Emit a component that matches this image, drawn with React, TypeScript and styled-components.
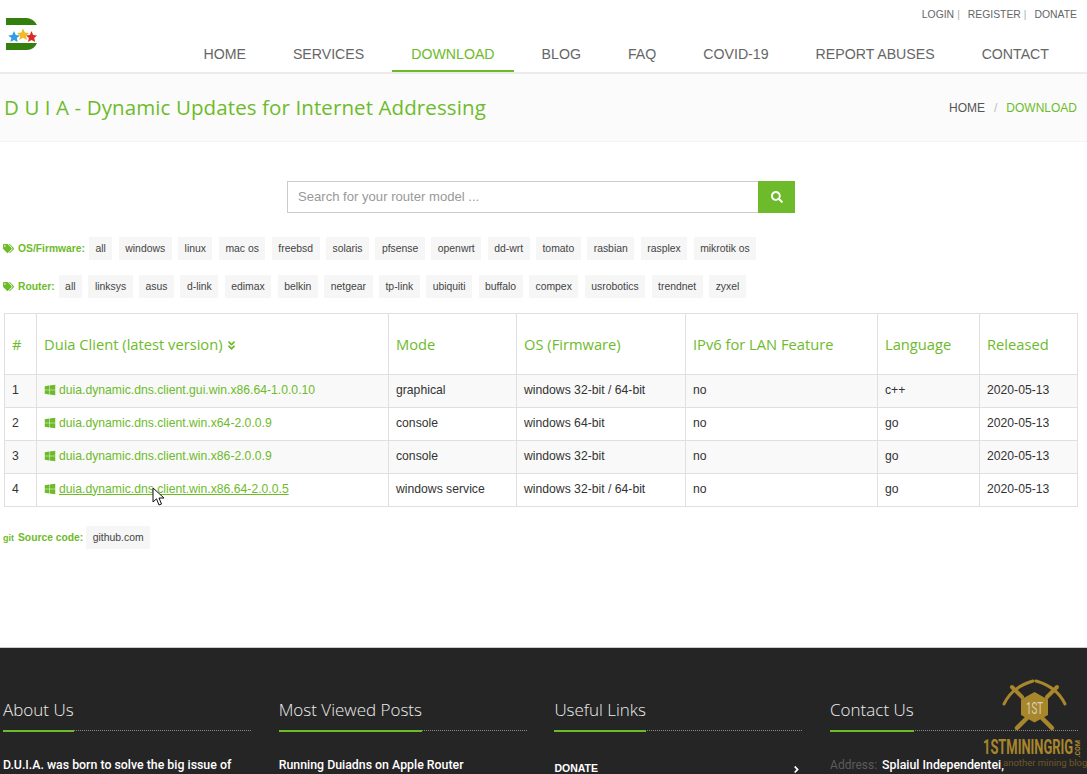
import React from "react";
import styled, { createGlobalStyle } from "styled-components";
import { FaWindows, FaTags, FaAngleDoubleDown, FaSearch, FaAngleRight } from "react-icons/fa";

const GREEN = "#6dbb2a";
const Global = createGlobalStyle`
  html, body { margin: 0; padding: 0; background: #fff; overflow: hidden; }
  body { font-family: "Liberation Sans", Arial, sans-serif; }
  #root { height: 774px; overflow: hidden; position: relative; }
  * { box-sizing: border-box; }
`;
const Page = styled.div`width: 1087px; height: 774px; overflow: hidden; position: relative;`;
const Header = styled.header`
  height: 74px; display: flex; justify-content: space-between;
  border-bottom: 2px solid #ececec;
`;
const LogoBox = styled.div`padding: 18px 0 0 6px;`;
const HeaderRight = styled.div`display: flex; flex-direction: column; align-items: flex-end; padding-right: 10px;`;
const TopLinks = styled.div`
  height: 29px; display: flex; align-items: center; font-size: 10.4px; color: #666;
`;
const TopLink = styled.span``;
const Sep = styled.span`margin: 0 8px 0 3px; color: #aaa; font-size: 10px;`;
const Nav = styled.nav`display: flex; gap: 9px; height: 43px; padding-right: 9px;`;
const NavItem = styled.a<{ $active?: boolean }>`
  padding: 0 19px; font-size: 14.17px; line-height: 51px; height: 43px;
  color: ${(p) => (p.$active ? GREEN : "#666")};
  border-bottom: 2px solid ${(p) => (p.$active ? GREEN : "transparent")};
  display: block; position: relative; z-index: 1; white-space: nowrap;
`;
const Band = styled.section`
  height: 68px; background: #fbfbfb; display: flex; align-items: center; justify-content: space-between;
  padding: 0 10px 2px 4px; border-bottom: 1px solid #f3f3f3;
`;
const PageTitle = styled.h1`
  margin: 0; font: 400 20.5px "Open Sans", sans-serif; color: ${GREEN};
  letter-spacing: 0.1px; white-space: nowrap;
`;
const Crumbs = styled.div`font-size: 12px; color: #555; display: flex; gap: 9px; padding-top: 2px;`;
const CrumbSep = styled.span`color: #bbb;`;
const CrumbActive = styled.span`color: ${GREEN};`;
const Main = styled.main`padding: 39px 10px 0 4px;`;
const SearchRow = styled.div`display: flex; justify-content: center; margin: 0 0 24px 0;`;
const SearchBar = styled.div`display: flex; width: 508px; height: 32px; margin-left: 1px;`;
const SearchInput = styled.div`
  flex: 1; border: 1px solid #ccc; border-right: none; background: #fff; color: #999;
  font-size: 13.1px; line-height: 30px; padding-left: 10px;
`;
const SearchButton = styled.div`
  width: 37px; background: ${GREEN}; color: #fff; display: flex; align-items: center; justify-content: center; font-size: 12px;
`;
const TagRow = styled.div`display: flex; align-items: center; height: 23px; margin-bottom: 15px;`;
const TagLabel = styled.span`
  display: flex; align-items: center; color: ${GREEN}; font-weight: 700; font-size: 10.3px; margin-left: -1px;
  white-space: nowrap; position: relative; top: -0.5px;
  svg { margin-right: 4px; font-size: 11px; }
`;
const Tags = styled.div`display: flex; gap: 6.45px; margin-left: 4px;`;
const Tag = styled.span`
  height: 23px; line-height: 23px; padding: 0 6.5px; background: #f6f6f6; color: #444; font-size: 10.4px; white-space: nowrap;
`;
const Table = styled.table`
  width: 1073px; border-collapse: collapse; table-layout: fixed; font-size: 12.2px; color: #333;
`;
const Col = styled.col<{ $w: number }>`width: ${(p) => p.$w}px;`;
const Th = styled.th`
  height: 61px; border: 1px solid #e0e0e0; padding: 0 7px; text-align: left; vertical-align: middle;
  font: 400 14.7px "Open Sans", sans-serif; color: ${GREEN}; white-space: nowrap;
  svg { font-size: 11px; vertical-align: -1px; }
`;
const Tr = styled.tr<{ $odd?: boolean }>`background: ${(p) => (p.$odd ? "#f9f9f9" : "#fff")};`;
const Td = styled.td`
  height: 33px; border: 1px solid #e0e0e0; padding: 0 7px 3px; white-space: nowrap;
`;
const FileCell = styled.span`display: inline-flex; align-items: center; color: ${GREEN}; position: relative; top: 1px;
  svg { font-size: 12px; margin-right: 3px; }
`;
const FileName = styled.span<{ $under?: boolean }>`
  text-decoration: ${(p) => (p.$under ? "underline" : "none")};
`;
const SourceRow = styled.div`display: flex; align-items: center; height: 23px; margin-top: 19px;`;
const GitMark = styled.span`color: ${GREEN}; font-weight: 700; font-size: 9px; margin: 0 4px 0 -1px;`;
const SourceLabel = styled.span`color: ${GREEN}; font-weight: 700; font-size: 10.3px; margin-right: 3px;`;
const Footer = styled.footer`
  position: absolute; left: 0; right: 0; top: 647px; height: 200px; background: #252525;
  border-top: 1px solid #ccc; display: grid; grid-template-columns: repeat(4, 248px); column-gap: 27.7px;
  padding: 50px 0 0 3px;
`;
const FooterCol = styled.div`min-width: 0;`;
const FooterTitleWrap = styled.div`
  border-bottom: 1px dotted #888; height: 33px; margin-bottom: 27px;
`;
const FooterTitle = styled.h4`
  display: inline-block; margin: 0; height: 34px; font: 300 17px/24px "Open Sans", sans-serif; color: #eee;
  border-bottom: 2px solid ${GREEN}; white-space: nowrap;
`;
const FooterText = styled.p`
  margin: 0; font: 500 12.35px/14px Roboto, sans-serif; color: #fff; white-space: nowrap;
`;
const FooterLink = styled.div`
  display: flex; justify-content: space-between; align-items: center; color: #fff; font-weight: 700; font-size: 10.5px;
  padding: 3px 0 0; svg { font-size: 11px; margin-top: 3px; }
`;
const Dim = styled.span`color: #5c5c5c; margin-right: 2px; font-weight: 400; font-size: 12px;`;
const Cursor = styled.svg`position: absolute; left: 152px; top: 487px; z-index: 5;`;
const Watermark = styled.div`
  position: absolute; left: 975px; top: 678px; width: 112px; height: 96px; z-index: 1; pointer-events: none;
`;
const MarkBig = styled.div`
  position: absolute; left: 8px; top: 61px; color: #a8862c;
  font: 700 21px/17px Roboto, sans-serif; transform: scaleX(.615); transform-origin: left top; white-space: nowrap;
`;
const MarkCom = styled.span`
  position: absolute; left: 99px; top: 62px; color: #a8862c; font: 700 7px/9px Roboto, sans-serif;
  writing-mode: vertical-rl; transform: rotate(180deg);
`;
const MarkSub = styled.span`
  position: absolute; left: 28px; top: 79px; color: #6e5a26; font: 400 9.5px/11px Roboto, sans-serif; white-space: nowrap;
`;
const FooterFront = styled.div`position: relative; z-index: 2;`;

const Logo = () => (
  <svg width="32" height="34" viewBox="0 0 32 34">
    <path d="M0 0H21Q28 1 31 7H0Z" fill="#33800f" />
    <path d="M0 25H31Q28 32 21 32H0Z" fill="#33800f" />
    <polygon points="8,13 9.8,17 14,17.4 10.8,20 11.8,24 8,22 4.4,24 5.4,20 2.2,17.4 6.2,17" fill="#2f9ee8" />
    <polygon points="17,10.5 18.9,14.5 23,15 20,17.7 20.9,22 17,19.8 13.2,22 14,17.7 11,15 15.2,14.5" fill="#f3bb22" />
    <polygon points="25.5,13 27.2,17 31,17.4 28.2,20 29.2,24 25.5,22 22,24 22.9,20 20,17.4 23.8,17" fill="#dd2b27" />
  </svg>
);

const osTags = ["all","windows","linux","mac os","freebsd","solaris","pfsense","openwrt","dd-wrt","tomato","rasbian","rasplex","mikrotik os"];
const routerTags = ["all","linksys","asus","d-link","edimax","belkin","netgear","tp-link","ubiquiti","buffalo","compex","usrobotics","trendnet","zyxel"];
const navItems = ["HOME","SERVICES","DOWNLOAD","BLOG","FAQ","COVID-19","REPORT ABUSES","CONTACT"];
const cols = [32, 352, 128, 169, 192, 102, 98];
const rows = [
  ["1","duia.dynamic.dns.client.gui.win.x86.64-1.0.0.10","graphical","windows 32-bit / 64-bit","no","c++","2020-05-13"],
  ["2","duia.dynamic.dns.client.win.x64-2.0.0.9","console","windows 64-bit","no","go","2020-05-13"],
  ["3","duia.dynamic.dns.client.win.x86-2.0.0.9","console","windows 32-bit","no","go","2020-05-13"],
  ["4","duia.dynamic.dns.client.win.x86.64-2.0.0.5","windows service","windows 32-bit / 64-bit","no","go","2020-05-13"],
];

export default function App() {
  return (
    <Page>
      <Global />
      <Header>
        <LogoBox><Logo /></LogoBox>
        <HeaderRight>
          <TopLinks>
            <TopLink>LOGIN</TopLink><Sep>|</Sep>
            <TopLink>REGISTER</TopLink><Sep>|</Sep>
            <TopLink>DONATE</TopLink>
          </TopLinks>
          <Nav>
            {navItems.map((n) => <NavItem key={n} $active={n === "DOWNLOAD"}>{n}</NavItem>)}
          </Nav>
        </HeaderRight>
      </Header>
      <Band>
        <PageTitle>D U I A - Dynamic Updates for Internet Addressing</PageTitle>
        <Crumbs><span>HOME</span><CrumbSep>/</CrumbSep><CrumbActive>DOWNLOAD</CrumbActive></Crumbs>
      </Band>
      <Main>
        <SearchRow>
          <SearchBar>
            <SearchInput>Search for your router model ...</SearchInput>
            <SearchButton><FaSearch /></SearchButton>
          </SearchBar>
        </SearchRow>
        <TagRow>
          <TagLabel><FaTags />OS/Firmware:</TagLabel>
          <Tags>{osTags.map((t) => <Tag key={t}>{t}</Tag>)}</Tags>
        </TagRow>
        <TagRow>
          <TagLabel><FaTags />Router:</TagLabel>
          <Tags>{routerTags.map((t) => <Tag key={t}>{t}</Tag>)}</Tags>
        </TagRow>
        <Table>
          <colgroup>{cols.map((w, i) => <Col key={i} $w={w} />)}</colgroup>
          <thead>
            <tr>
              <Th>#</Th>
              <Th>Duia Client (latest version) <FaAngleDoubleDown /></Th>
              <Th>Mode</Th>
              <Th>OS (Firmware)</Th>
              <Th>IPv6 for LAN Feature</Th>
              <Th>Language</Th>
              <Th>Released</Th>
            </tr>
          </thead>
          <tbody>
            {rows.map((r, i) => (
              <Tr key={r[0]} $odd={i % 2 === 0}>
                <Td>{r[0]}</Td>
                <Td><FileCell><FaWindows /><FileName $under={i === 3}>{r[1]}</FileName></FileCell></Td>
                <Td>{r[2]}</Td>
                <Td>{r[3]}</Td>
                <Td>{r[4]}</Td>
                <Td>{r[5]}</Td>
                <Td>{r[6]}</Td>
              </Tr>
            ))}
          </tbody>
        </Table>
        <SourceRow>
          <GitMark>git</GitMark>
          <SourceLabel>Source code:</SourceLabel>
          <Tag>github.com</Tag>
        </SourceRow>
      </Main>
      <Cursor width="14" height="20" viewBox="0 0 14 20">
        <path d="M1 1V15L4.5 11.8L7 18L9.5 17L7 11H12Z" fill="#fff" stroke="#111" strokeWidth="1" />
      </Cursor>
      <Footer>
        <FooterCol>
          <FooterTitleWrap><FooterTitle>About Us</FooterTitle></FooterTitleWrap>
          <FooterText>D.U.I.A. was born to solve the big issue of</FooterText>
        </FooterCol>
        <FooterCol>
          <FooterTitleWrap><FooterTitle>Most Viewed Posts</FooterTitle></FooterTitleWrap>
          <FooterText>Running Duiadns on Apple Router</FooterText>
        </FooterCol>
        <FooterCol>
          <FooterTitleWrap><FooterTitle>Useful Links</FooterTitle></FooterTitleWrap>
          <FooterLink><span>DONATE</span><FaAngleRight /></FooterLink>
        </FooterCol>
        <FooterCol>
          <FooterTitleWrap><FooterTitle>Contact Us</FooterTitle></FooterTitleWrap>
          <FooterFront>
            <FooterText><Dim>Address:</Dim> Splaiul Independentei,</FooterText>
          </FooterFront>
        </FooterCol>
      </Footer>
      <Watermark>
        <svg width="112" height="60" viewBox="0 0 112 60">
          <g fill="none" stroke="#a8862c" strokeLinecap="round">
            <path d="M29 26Q37 9 58 3" strokeWidth="3" />
            <path d="M90 26Q82 9 61 3" strokeWidth="3" />
            <path d="M37 9L47 19" strokeWidth="4" />
            <path d="M82 9L72 19" strokeWidth="4" />
            <path d="M42 50L52 40" strokeWidth="4.5" />
            <path d="M77 50L67 40" strokeWidth="4.5" />
          </g>
          <polygon points="59.5,14 73,21.5 73,37 59.5,44.5 46,37 46,21.5" fill="#a8862c" />
          <text x="59.5" y="36" textAnchor="middle" fontFamily="Roboto, sans-serif" fontSize="17" fill="#d8d0b8" textLength="17" lengthAdjust="spacingAndGlyphs">1ST</text>
        </svg>
        <MarkBig>1STMININGRIG</MarkBig>
        <MarkCom>.COM</MarkCom>
        <MarkSub>another mining blog</MarkSub>
      </Watermark>
    </Page>
  );
}
